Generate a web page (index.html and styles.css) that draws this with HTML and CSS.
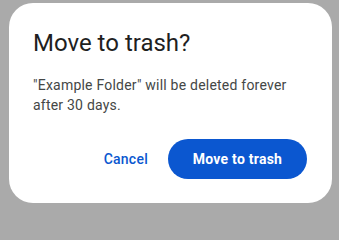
FILE: index.html
```html
<!DOCTYPE html>
<html>
<head>
<meta charset="utf-8">
<link rel="stylesheet" href="styles.css">
</head>
<body>
<div class="dialog">
  <h1 class="title">Move to trash?</h1>
  <p class="message">"Example Folder" will be deleted forever after 30 days.</p>
  <div class="actions">
    <button class="btn btn-text">Cancel</button>
    <button class="btn btn-filled">Move to trash</button>
  </div>
</div>
</body>
</html>
```
FILE: styles.css
```css
html, body {
  margin: 0;
  padding: 0;
  background: #aaaaaa;
}
body {
  width: 339px;
  height: 207px;
  overflow: hidden;
}
.dialog {
  box-sizing: border-box;
  margin: 3px 0 0 9px;
  width: 323px;
  height: 200px;
  background: #ffffff;
  border-radius: 24px;
  padding: 24px 25px 24px 24px;
  display: flex;
  flex-direction: column;
  font-family: Roboto, "Liberation Sans", sans-serif;
}
.title {
  margin: 0;
  font-size: 24px;
  line-height: 32px;
  font-weight: 400;
  color: #1f1f1f;
}
.message {
  margin: 16px 0 0 0;
  font-size: 14px;
  line-height: 20px;
  letter-spacing: 0.22px;
  color: #444746;
}
.actions {
  margin-top: auto;
  display: flex;
  justify-content: flex-end;
  align-items: center;
  gap: 8px;
}
.btn {
  font-family: inherit;
  font-size: 14px;
  letter-spacing: 0.25px;
  border: none;
  height: 40px;
  border-radius: 20px;
  cursor: pointer;
}
.btn-text {
  background: transparent;
  color: #0b57d0;
  font-weight: 500;
  padding: 0 12px;
}
.btn-filled {
  background: #0b57d0;
  color: #ffffff;
  font-weight: 700;
  padding: 0 20px;
  width: 139px;
}
```
